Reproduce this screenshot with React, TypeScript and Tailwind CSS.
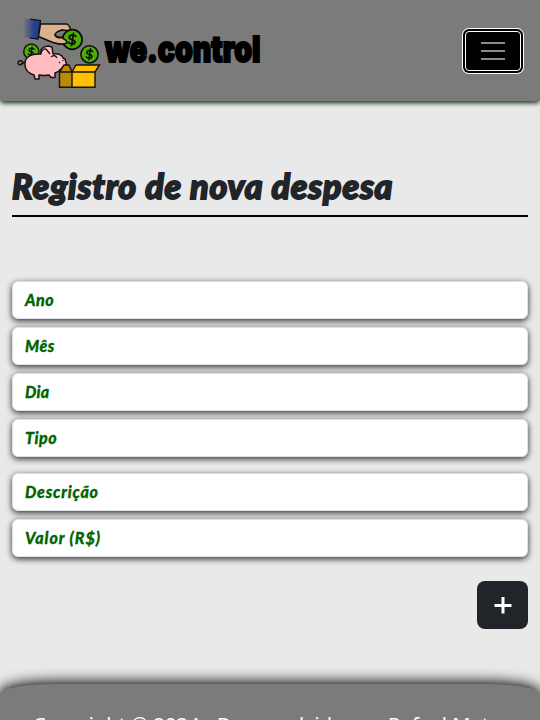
import React from 'react';

function Coin({ x, y, r }: { x: number; y: number; r: number }) {
  return (
    <g transform={`translate(${x} ${y}) scale(${r / 9})`} stroke="#0a0f05" fill="none" strokeLinecap="round">
      <circle r="9" fill="#4dac08" strokeWidth="1.6" />
      <path d="M3.2 -3C1-5-3-4-2.8-1.6C-2.5.5 3 0 2.6 2.3C2.2 4.6-2 4.4-3.4 2.7M1-5.7L-.6 5.7" strokeWidth="1.6" />
    </g>
  );
}

function Logo() {
  return (
    <svg width="250" height="76" viewBox="14 14 250 76" className="mt-[3px] block" aria-label="we.control">
      <defs>
        <linearGradient id="sleeve" x1="0" x2="1">
          <stop offset="0" stopColor="#243f8c" stopOpacity="0" />
          <stop offset=".65" stopColor="#243f8c" />
        </linearGradient>
      </defs>
      <path d="M23 18.500L40.500 20.500L38 39.500L23 37.500Z" fill="url(#sleeve)" />
      <path d="M30 19.200L40.500 20.500L38 39L30 38" fill="none" stroke="#0b1020" strokeWidth="1.200" />
      <path d="M40.500 24L67 24Q70 26 71 31L62 30Q56 32 55 35Q56 38 62 38L67 43Q60 45 53 42.500L48 40.500L38.500 36.500Z" fill="#dcb28c" stroke="#111" strokeWidth="1.500" strokeLinejoin="round" />
      <Coin x={72.300} y={39.500} r={9.800} />
      <path d="M62 38Q67 40 67 43Q63 45 55 43" fill="#dcb28c" stroke="#111" strokeWidth="1.400" />
      <path d="M63 30Q56 31 55 35Q57 38 62 37" fill="#7b7b7b" stroke="#111" strokeWidth="1.400" />
      <Coin x={89.500} y={54.300} r={8.600} />
      <Coin x={31.300} y={51.700} r={7.600} />
      <path d="M25 62Q19 67 18 63Q18 60 22 61Q24 63 21 64" fill="none" stroke="#191313" strokeWidth="1.400" />
      <path d="M25 65C24 57 31 53.500 41 54L41 50Q42 47 48 46L52 47L53 54Q61 53 63 58L65 59L66.500 64L61 69Q59 72 55 73L55 77.500L51 77.500L49 75Q44 76 39 75L39 79L35 79L34 75Q25 72 25 65Z" fill="#ffbdc1" stroke="#191313" strokeWidth="1.500" strokeLinejoin="round" />
      <path d="M41 53Q43 48 46 49L50 54M51 57Q55 54 57 58M59 62L60 63M63 60L63 61" fill="none" stroke="#191313" strokeWidth="1.300" />
      <path d="M59.500 72H72V87.300H59.500Z" fill="#b98a08" />
      <path d="M72 72H95V87.300H72Z" fill="#ffc000" />
      <path d="M64 65L69 65L72 72H59.500Z" fill="#b98a08" />
      <path d="M76 65H99.500L95 72H72Z" fill="#ffc000" />
      <path d="M59.500 72V87.300H95V72M72 72V87.300M59.500 72L64 65H69L72 72L76 65H99.500L95 72H59.500" fill="none" stroke="#17130a" strokeWidth="1.400" />
      <text x="105" y="62" textLength="155.500" lengthAdjust="spacingAndGlyphs" fontFamily="Inter, sans-serif" fontWeight="900" fontSize="35.500" stroke="#000" strokeWidth="2">we.control</text>
    </svg>
  );
}

function Field({ label, tracking = 'tracking-[0.5px]' }: { label: string; tracking?: string }) {
  return (
    <div className={`flex h-[38px] items-center rounded-md border border-[#dee2e6] bg-white px-3 font-['Lato',sans-serif] text-base font-black italic text-[#006400] shadow-[0_2px_6px_rgba(0,0,0,0.8)] [-webkit-text-stroke:0.3px_#006400] ${tracking}`}>
      {label}
    </div>
  );
}

export default function App() {
  return (
    <div className="flex h-[720px] w-full flex-col overflow-hidden bg-[#e9e9e9] font-['Noto_Sans',sans-serif] text-[#212529]">
      <header className="flex h-[101px] shrink-0 items-center justify-between rounded-b-sm bg-[#7b7b7b] pl-3.5 pr-[17px] shadow-[0_2px_5px_#0b2b0b]">
        <Logo />
        <button aria-label="Menu" className="mt-px flex h-11 w-[60px] items-center justify-center rounded-md bg-black ring-1 ring-white outline-1 -outline-offset-3 outline-white">
          <span className="flex w-6 flex-col gap-1.5">
            <span className="h-0.5 bg-[#8c8c8c]" />
            <span className="h-0.5 bg-[#8c8c8c]" />
            <span className="h-0.5 bg-[#8c8c8c]" />
          </span>
        </button>
      </header>
      <main className="shrink-0 px-3 pt-[65px]">
        <h1 className="flex h-[51px] items-center whitespace-nowrap border-b-2 border-black pb-2.5 font-['Lato',sans-serif] text-[34px] font-black italic tracking-[0.85px] [-webkit-text-stroke:1.8px_#212529]">
          Registro de nova despesa
        </h1>
        <form className="pt-16">
          <div className="flex flex-col gap-2">
            <Field label="Ano" />
            <Field label="Mês" />
            <Field label="Dia" tracking="tracking-[0.2px]" />
            <Field label="Tipo" />
          </div>
          <div className="mt-4 flex flex-col gap-2">
            <Field label="Descrição" tracking="tracking-[0.8px]" />
            <Field label="Valor (R$)" tracking="tracking-[0.95px]" />
          </div>
          <div className="mt-6 flex justify-end">
            <button type="button" aria-label="Adicionar" className="flex h-12 w-[51px] items-center justify-center rounded-lg bg-[#212529]">
              <svg width="18" height="18" viewBox="0 0 18 18">
                <path d="M9 1V17.500M.5 9.500H17.500" stroke="white" strokeWidth="3" />
              </svg>
            </button>
          </div>
        </form>
      </main>
      <footer className="mt-[55px] h-[100px] shrink-0 whitespace-nowrap rounded-t-[54px_10px] bg-[#7b7b7b] pl-[33px] pt-[27px] text-xl tracking-[0.11px] text-white shadow-[0_-2px_14px_black]">
        Copyright © 2024 - Desenvolvido por Rafael Matos
      </footer>
    </div>
  );
}
